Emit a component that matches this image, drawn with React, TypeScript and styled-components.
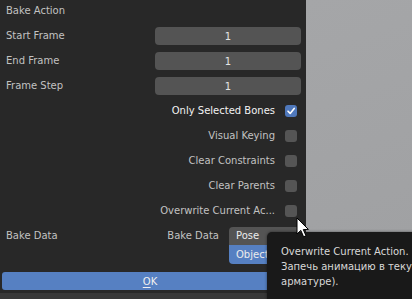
import React from "react";
import styled, { createGlobalStyle } from "styled-components";

const Global = createGlobalStyle`
  html, body { margin: 0; padding: 0; background: #282828; }
  body { font-family: "DejaVu Sans", "Liberation Sans", sans-serif; font-size: 10px; }
  * { box-sizing: border-box; }
`;

const Page = styled.div`
  position: relative;
  width: 412px;
  height: 299px;
  overflow: hidden;
  display: flex;
  flex-direction: column;
`;

const Main = styled.div`
  display: flex;
  height: 293px;
`;

const Panel = styled.div`
  width: 306px;
  background: #282828;
  display: flex;
  flex-direction: column;
  gap: 7px;
  padding: 2px 5px 0 6px;
`;

const Viewport = styled.div`
  flex: 1;
  background: linear-gradient(160deg, #a5a6a8 0%, #a2a3a5 50%, #9fa0a2 100%);
`;

const BottomBand = styled.div`
  height: 6px;
  background: #383838;
`;

const Row = styled.div`
  display: grid;
  grid-template-columns: 149px 1fr;
  align-items: center;
  height: 18px;
`;

const Label = styled.span<{ $bright?: boolean }>`
  color: ${(p) => (p.$bright ? "#f2f2f2" : "#c2c2c2")};
  white-space: nowrap;
  line-height: 18px;
`;

const Field = styled.div`
  height: 18px;
  background: #545454;
  border-radius: 4px;
  color: #e6e6e6;
  display: flex;
  align-items: center;
  justify-content: center;
`;

const CheckRow = styled.div`
  display: flex;
  justify-content: flex-end;
  align-items: center;
  gap: 10px;
  height: 18px;
  padding-right: 4px;
`;

const Box = styled.div<{ $on?: boolean }>`
  width: 12px;
  height: 12px;
  border-radius: 3px;
  background: ${(p) => (p.$on ? "#4f78bb" : "#555555")};
  display: flex;
  align-items: center;
  justify-content: center;
`;

const DataRow = styled.div`
  display: grid;
  grid-template-columns: 149px 1fr;
  align-items: start;
  height: 37px;
`;

const DataRight = styled.div`
  display: flex;
  justify-content: flex-end;
  align-items: flex-start;
  gap: 10px;
`;

const EnumCol = styled.div`
  width: 72px;
  display: flex;
  flex-direction: column;
`;

const EnumItem = styled.div<{ $active?: boolean; $first?: boolean }>`
  height: ${(p) => (p.$first ? 18 : 19)}px;
  line-height: ${(p) => (p.$first ? 18 : 19)}px;
  padding-left: 7px;
  background: ${(p) => (p.$active ? "#5680c2" : "#545454")};
  color: #ececec;
  border-radius: ${(p) => (p.$first ? "4px 4px 0 0" : "0 0 4px 4px")};
`;

const OkButton = styled.div`
  margin: 1px 0 0 -4px;
  width: 296px;
  height: 18px;
  background: #5680c2;
  border-radius: 3px;
  color: #f0f0f0;
  display: flex;
  align-items: center;
  justify-content: center;
`;

const Accel = styled.span`
  text-decoration: underline;
  text-underline-offset: 2px;
`;

const Tooltip = styled.div`
  position: absolute;
  left: 267px;
  top: 232px;
  width: 160px;
  height: 72px;
  background: #191919;
  border-radius: 5px;
  box-shadow: 0 0 3px rgba(0, 0, 0, 0.5);
  padding: 12px 0 0 14px;
  color: #d8d8d8;
  line-height: 15px;
  white-space: nowrap;
`;

const Cursor = styled.svg`
  position: absolute;
  left: 296px;
  top: 217px;
`;

const Check = () => (
  <svg width="10" height="10" viewBox="0 0 10 10">
    <path d="M2 5.2 L4.2 7.4 L8.2 2.4" fill="none" stroke="#ffffff" strokeWidth="1.6" strokeLinecap="round" strokeLinejoin="round" />
  </svg>
);

const checks: { label: string; on?: boolean }[] = [
  { label: "Only Selected Bones", on: true },
  { label: "Visual Keying" },
  { label: "Clear Constraints" },
  { label: "Clear Parents" },
  { label: "Overwrite Current Ac..." },
];

export default function App() {
  return (
    <Page>
      <Global />
      <Main>
        <Panel>
          <Row>
            <Label>Bake Action</Label>
          </Row>
          {["Start Frame", "End Frame", "Frame Step"].map((l) => (
            <Row key={l}>
              <Label>{l}</Label>
              <Field>1</Field>
            </Row>
          ))}
          {checks.map((c) => (
            <CheckRow key={c.label}>
              <Label $bright={c.on}>{c.label}</Label>
              <Box $on={c.on}>{c.on && <Check />}</Box>
            </CheckRow>
          ))}
          <DataRow>
            <Label>Bake Data</Label>
            <DataRight>
              <Label>Bake Data</Label>
              <EnumCol>
                <EnumItem $first>Pose</EnumItem>
                <EnumItem $active>Object</EnumItem>
              </EnumCol>
            </DataRight>
          </DataRow>
          <OkButton>
            <span>
              <Accel>O</Accel>K
            </span>
          </OkButton>
        </Panel>
        <Viewport />
      </Main>
      <BottomBand />
      <Tooltip>
        <div>Overwrite Current Action.</div>
        <div>Запечь анимацию в текущее действие (для</div>
        <div>арматуре).</div>
      </Tooltip>
      <Cursor width="14" height="22" viewBox="0 0 14 22">
        <path d="M1 1 L1 17 L4.8 13.4 L7.6 19.8 L10 18.8 L7.3 12.6 L12.4 12.4 Z" fill="#ffffff" stroke="#000000" strokeWidth="1" strokeLinejoin="round" />
      </Cursor>
    </Page>
  );
}
